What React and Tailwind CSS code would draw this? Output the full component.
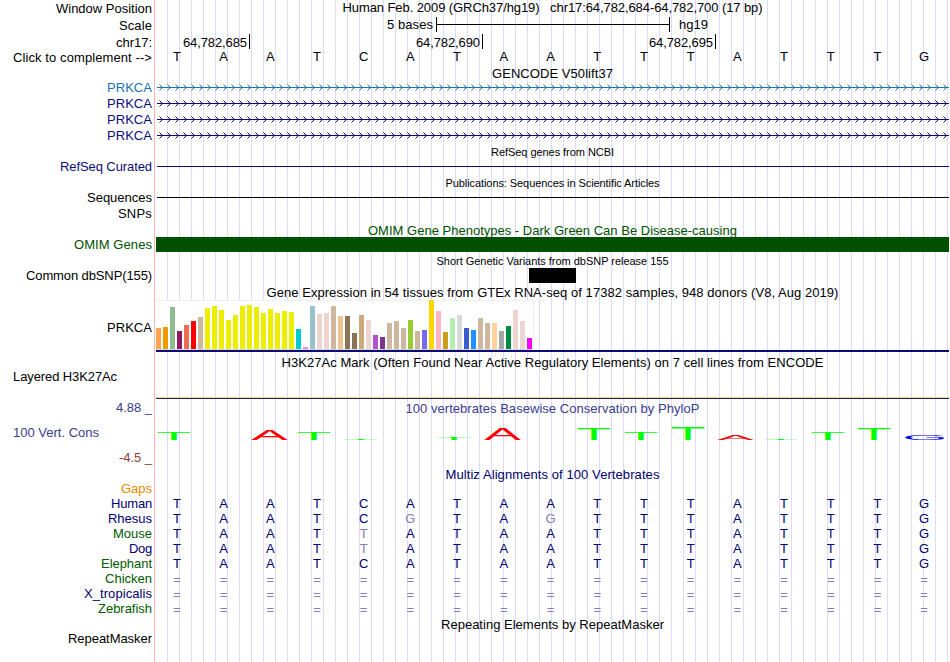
import { useLayoutEffect, useRef } from "react";

// Text whose letter spacing is tuned so that it spans exactly w pixels.
function Fit({ w, className = "", children }) {
  const ref = useRef(null);
  useLayoutEffect(() => {
    const el = ref.current;
    el.style.letterSpacing = "0px";
    const natural = el.getBoundingClientRect().width;
    el.style.letterSpacing = `${(w - natural) / children.length}px`;
  }, [w, children]);
  return (
    <span ref={ref} className={`inline-block whitespace-pre ${className}`}>
      {children}
    </span>
  );
}

const LABELS = [
  ["Window Position", 96, "h-[17px]"],
  ["Scale", 33, "h-[17px]"],
  ["chr17:", 36, "h-[15px]"],
  ["Click to complement -->", 139, "h-[30px]"],
  ["PRKCA", 45, "h-[16px] text-[#1874b4]"],
  ["PRKCA", 45, "h-[16px] text-[#0c0c78]"],
  ["PRKCA", 45, "h-[16px] text-[#0c0c78]"],
  ["PRKCA", 45, "h-[31px] text-[#0c0c78]"],
  ["RefSeq Curated", 92, "h-[31px] text-[#0c0c78]"],
  ["Sequences", 65, "h-[16px]"],
  ["SNPs", 34, "h-[31px]"],
  ["OMIM Genes", 78, "h-[31px] text-[#005000]"],
  ["Common dbSNP(155)", 126, "h-[52px]"],
  ["PRKCA", 45, "h-[49px]"],
  ["Layered H3K27Ac", 104, "h-[31px] pr-[35px]"],
  ["4.88 _", 36, "h-[25px] text-[#3c3c8c]"],
  ["100 Vert. Cons", 86, "h-[25px] pr-[53px] text-[#3c3c8c]"],
  ["-4.5 _", 33, "h-[31px] text-[#8c3c3c]"],
  ["Gaps", 31, "h-[15px] text-[#e68c00]"],
  ["Human", 41, "h-[15px] text-[#00006e]"],
  ["Rhesus", 44, "h-[15px] text-[#00006e]"],
  ["Mouse", 39, "h-[15px] text-[#005a00]"],
  ["Dog", 23, "h-[15px] text-[#00006e]"],
  ["Elephant", 51, "h-[15px] text-[#005a00]"],
  ["Chicken", 47, "h-[15px] text-[#005a00]"],
  ["X_tropicalis", 68, "h-[15px] text-[#00006e]"],
  ["Zebrafish", 54, "h-[30px] text-[#005a00]"],
  ["RepeatMasker", 84, "h-[15px]"],
];

const Y = "#eeee00";
const BARS = [
  [21, "#ffa54f"], [22, "#ee9a00"], [42, "#8fbc8f"], [18, "#8b1c62"], [24, "#ee6a50"],
  [28, "#ff0000"], [32, "#cdb79e"], [41, Y], [43, Y], [39, Y], [29, Y], [34, Y], [43, Y],
  [44, Y], [42, Y], [36, Y], [40, Y], [36, Y], [38, Y], [37, Y], [20, "#00cdcd"],
  [2, "#ee82ee"], [43, "#9ac0cd"], [35, "#eed5d2"], [36, "#eed5d2"], [43, "#cdb79e"],
  [33, "#eec591"], [33, "#8b7355"], [16, "#8b7355"], [34, "#cdaa7d"], [29, "#eed5d2"],
  [14, "#b452cd"], [12, "#7a378b"], [26, "#cdb79e"], [28, "#cdb79e"], [21, "#cdb79e"],
  [29, "#9acd32"], [18, "#cdb79e"], [19, "#7a67ee"], [49, "#ffd700"], [38, "#ffb6c1"],
  [17, "#cd9b1d"], [31, "#b4eeb4"], [34, "#d9d9d9"], [21, "#3a5fcd"], [19, "#1e90ff"],
  [31, "#cdb79e"], [26, "#cdb79e"], [26, "#ffd39b"], [18, "#a6a6a6"], [23, "#008b45"],
  [39, "#eed5d2"], [28, "#eed5d2"], [11, "#ff00ff"],
];

// Conservation letters: glyph, centre x, height, drawn width.
const LOGO = [
  ["T", 174, 8, 33], ["A", 269.5, 10, 36], ["T", 314, 8, 33], ["T", 361, 1, 33],
  ["T", 454, 2, 33], ["A", 502.5, 11, 36], ["T", 594, 12, 33], ["T", 641, 8, 33],
  ["T", 688, 13, 33], ["A", 735.5, 5, 36], ["T", 781, 0.8, 33], ["T", 828, 8, 33],
  ["T", 874, 12, 33], ["G", 925, 5, 39],
];
const GLYPH = { T: [22.8, "#00ff00"], A: [26.2, "#ff0000"], G: [26.6, "#0000ff"] };

const HUMAN = "TAATCATAATTTATTTG";
const ALIGN = [
  [HUMAN, []],
  ["TAATCGTAGTTTATTTG", [5, 8]],
  ["TAATTATAATTTATTTG", [4]],
  ["TAATTATAATTTATTTG", [4]],
  [HUMAN, []],
];

function Bases({ seq, faint = [], className = "" }) {
  return (
    <div className={`-ml-[1.5px] grid h-[15px] w-[794px] grid-cols-17 text-center ${className}`}>
      {[...seq].map((c, i) => (
        <span key={i} className={faint.includes(i) ? "text-[#8080b8]" : ""}>
          {c}
        </span>
      ))}
    </div>
  );
}

function Title({ w, className = "", children }) {
  return (
    <div className={`flex w-[795px] justify-center ${className}`}>
      <Fit w={w}>{children}</Fit>
    </div>
  );
}

function GeneLine({ color }) {
  return (
    <svg className="block h-[16px] w-[794px]" viewBox="0 0 794 16" stroke={color} fill="none">
      <path d="M2 7.5H794" />
      {Array.from({ length: 99 }, (_, i) => (
        <path key={i} d={`M${4.5 + i * 8} 4.5l3 3l-3 3`} />
      ))}
    </svg>
  );
}

export default function App() {
  return (
    <div className="flex h-[662px] w-[950px] overflow-hidden bg-white font-['Liberation_Sans',Arial,sans-serif] text-[13px] leading-[15px] text-black">
      <div className="flex w-[154px] flex-col pt-[1px] pr-[2px]">
        {LABELS.map(([text, w, cls], i) => (
          <div key={i} className={`flex shrink-0 justify-end ${cls}`}>
            <Fit w={w}>{text}</Fit>
          </div>
        ))}
      </div>

      <div className="flex w-[796px] flex-col overflow-hidden border-l border-[#ffb4b4] bg-[linear-gradient(#fff,#fff),linear-gradient(90deg,#dcdcfa_1px,transparent_1px)] bg-[length:1px_100%,12px_100%] [background-repeat:no-repeat,repeat] *:shrink-0">
        <Title w={420} className="h-[17px]">
          {"Human Feb. 2009 (GRCh37/hg19)   chr17:64,782,684-64,782,700 (17 bp)"}
        </Title>

        <div className="flex h-[17px] pl-[232px]">
          <Fit w={46}>5 bases</Fit>
          <div className="ml-[3px] flex h-[15px] w-[234px] items-center border-x border-black">
            <div className="h-px w-full bg-black" />
          </div>
          <Fit w={29} className="ml-[9px]">hg19</Fit>
        </div>

        <div className="flex h-[15px] pl-[28px]">
          {["64,782,685", "64,782,690", "64,782,695"].map((n) => (
            <div key={n} className="flex w-[233px]">
              <Fit w={64} className="pt-px">{n}</Fit>
              <div className="ml-[2px] h-[15px] w-px bg-black" />
            </div>
          ))}
        </div>

        <Bases seq={HUMAN} />

        <Title w={121} className="mt-[2px] h-[14px]">GENCODE V50lift37</Title>
        <GeneLine color="#1874b4" />
        <GeneLine color="#0c0c78" />
        <GeneLine color="#0c0c78" />
        <GeneLine color="#0c0c78" />

        <Title w={123} className="mt-[2px] h-[12px] text-[11px] leading-[12px]">RefSeq genes from NCBI</Title>
        <div className="mt-[8px] ml-[2px] h-px w-[792px] bg-[#0c0c78]" />
        <Title w={214} className="mt-[10px] h-[12px] text-[11px] leading-[12px]">
          Publications: Sequences in Scientific Articles
        </Title>
        <div className="mt-[8px] ml-[2px] h-px w-[792px] bg-black" />

        <Title w={369} className="mt-[25px] h-[14px] text-[#005000]">
          OMIM Gene Phenotypes - Dark Green Can Be Disease-causing
        </Title>
        <div className="ml-px h-[15px] w-[793px] bg-[#005000]" />

        <Title w={232} className="mt-[3px] h-[12px] text-[11px] leading-[12px]">
          Short Genetic Variants from dbSNP release 155
        </Title>
        <div className="mt-px ml-[374px] h-[15px] w-[47px] bg-black" />

        <Title w={572} className="mt-[2px] h-[15px]">
          Gene Expression in 54 tissues from GTEx RNA-seq of 17382 samples, 948 donors (V8, Aug 2019)
        </Title>
        <div className="ml-px flex h-[50px] w-[378px] items-end gap-[2px] border-r border-b border-[#d8d8d8] border-r-[#f0f0f0] bg-white shadow-[inset_0_1px_0_#f0f0f0]">
          {BARS.map(([h, c], i) => (
            <div key={i} className="w-[5px] shrink-0" style={{ height: h, backgroundColor: c }} />
          ))}
        </div>
        <div className="ml-px h-[2px] w-[793px] bg-[#0c0c78]" />

        <Title w={542} className="mt-[3px] h-[15px]">
          H3K27Ac Mark (Often Found Near Active Regulatory Elements) on 7 cell lines from ENCODE
        </Title>
        <div className="mt-[27px] ml-px h-[2px] w-[793px] border-t border-[#ffd890] bg-[#14205a]" />

        <Title w={294} className="mt-[2px] h-[15px] text-[#3c3c8c]">
          100 vertebrates Basewise Conservation by PhyloP
        </Title>
        <svg className="block h-[51px] w-[794px]" viewBox="155 416 794 51">
          {LOGO.map(([c, x, h, w], i) => (
            <text
              key={i}
              transform={`translate(${x} 440) scale(${w / GLYPH[c][0]} ${h / 28.2})`}
              textAnchor="middle"
              fontSize="40"
              fill={GLYPH[c][1]}
            >
              {c}
            </text>
          ))}
        </svg>

        <Title w={214} className="h-[15px] text-[#00006e]">Multiz Alignments of 100 Vertebrates</Title>
        <div className="mt-[14px] text-[#00006e]">
          {ALIGN.map(([seq, faint], i) => (
            <Bases key={i} seq={seq} faint={faint} />
          ))}
          {[0, 1, 2].map((i) => (
            <Bases key={i} seq="=================" className="pt-px text-[#8080b8]" />
          ))}
        </div>
        <Title w={223} className="mt-px h-[15px]">Repeating Elements by RepeatMasker</Title>
      </div>
    </div>
  );
}
